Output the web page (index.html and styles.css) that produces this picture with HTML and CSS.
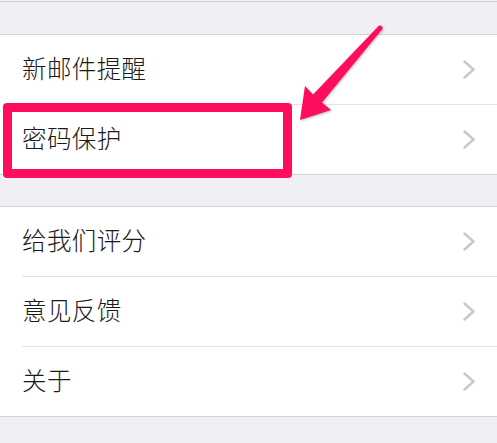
FILE: index.html
```html
<!DOCTYPE html>
<html lang="zh">
<head>
<meta charset="utf-8">
<link rel="stylesheet" href="styles.css">
</head>
<body>
<div class="page">
  <div class="topline"></div>
  <div class="group g1">
    <div class="row"><span class="label">新邮件提醒</span><svg class="chev" viewBox="0 0 12 19"><polyline points="1.5,1.5 10.5,9.5 1.5,17.5"/></svg></div>
    <div class="row"><span class="label">密码保护</span><svg class="chev" viewBox="0 0 12 19"><polyline points="1.5,1.5 10.5,9.5 1.5,17.5"/></svg></div>
  </div>
  <div class="group g2">
    <div class="row"><span class="label">给我们评分</span><svg class="chev" viewBox="0 0 12 19"><polyline points="1.5,1.5 10.5,9.5 1.5,17.5"/></svg></div>
    <div class="row"><span class="label">意见反馈</span><svg class="chev" viewBox="0 0 12 19"><polyline points="1.5,1.5 10.5,9.5 1.5,17.5"/></svg></div>
    <div class="row"><span class="label">关于</span><svg class="chev" viewBox="0 0 12 19"><polyline points="1.5,1.5 10.5,9.5 1.5,17.5"/></svg></div>
  </div>
  <div class="highlight"></div>
  <svg class="arrow" width="497" height="443" viewBox="0 0 497 443">
    <polygon points="300,120 305,86 313,94.6 378.1,26.4 381.9,29.6 322,102.4 331,110"/>
    <circle cx="380" cy="28" r="2.5"/>
  </svg>
</div>
</body>
</html>
```

FILE: styles.css
```css
html, body {
  margin: 0;
  padding: 0;
}
body {
  background: #efeff4;
  font-family: "Noto Sans CJK SC", "Noto Sans", sans-serif;
  width: 497px;
  height: 443px;
  overflow: hidden;
}
.page {
  position: relative;
  width: 497px;
  height: 443px;
}
.topline {
  height: 1px;
  border-bottom: 1px solid #cfcfd4;
}
.group {
  background: #fff;
  border-top: 1px solid #d3d3d8;
  border-bottom: 1px solid #d3d3d8;
  padding-left: 22px;
}
.g1 {
  margin-top: 32px;
}
.g2 {
  margin-top: 31px;
}
.row {
  height: 69px;
  display: flex;
  align-items: center;
  justify-content: space-between;
  padding-right: 22px;
  border-bottom: 1px solid #e3e3e6;
}
.row:last-child {
  border-bottom: none;
}
.label {
  font-size: 24.5px;
  font-weight: 300;
  color: #1a1a1a;
  letter-spacing: 0.4px;
  line-height: 1;
  margin-top: -2px;
}
.chev {
  width: 12px;
  height: 19px;
  fill: none;
  stroke: #c7c7cc;
  stroke-width: 2.4;
  stroke-linecap: round;
  stroke-linejoin: round;
}
.highlight {
  position: absolute;
  left: 3px;
  top: 103px;
  width: 271px;
  height: 57px;
  border: 9px solid #fd0d5c;
  border-radius: 4px;
}
.arrow {
  position: absolute;
  left: 0;
  top: 0;
  fill: #fd0d5c;
  filter: drop-shadow(1px 1px 1px rgba(0,0,0,0.25));
}
```
